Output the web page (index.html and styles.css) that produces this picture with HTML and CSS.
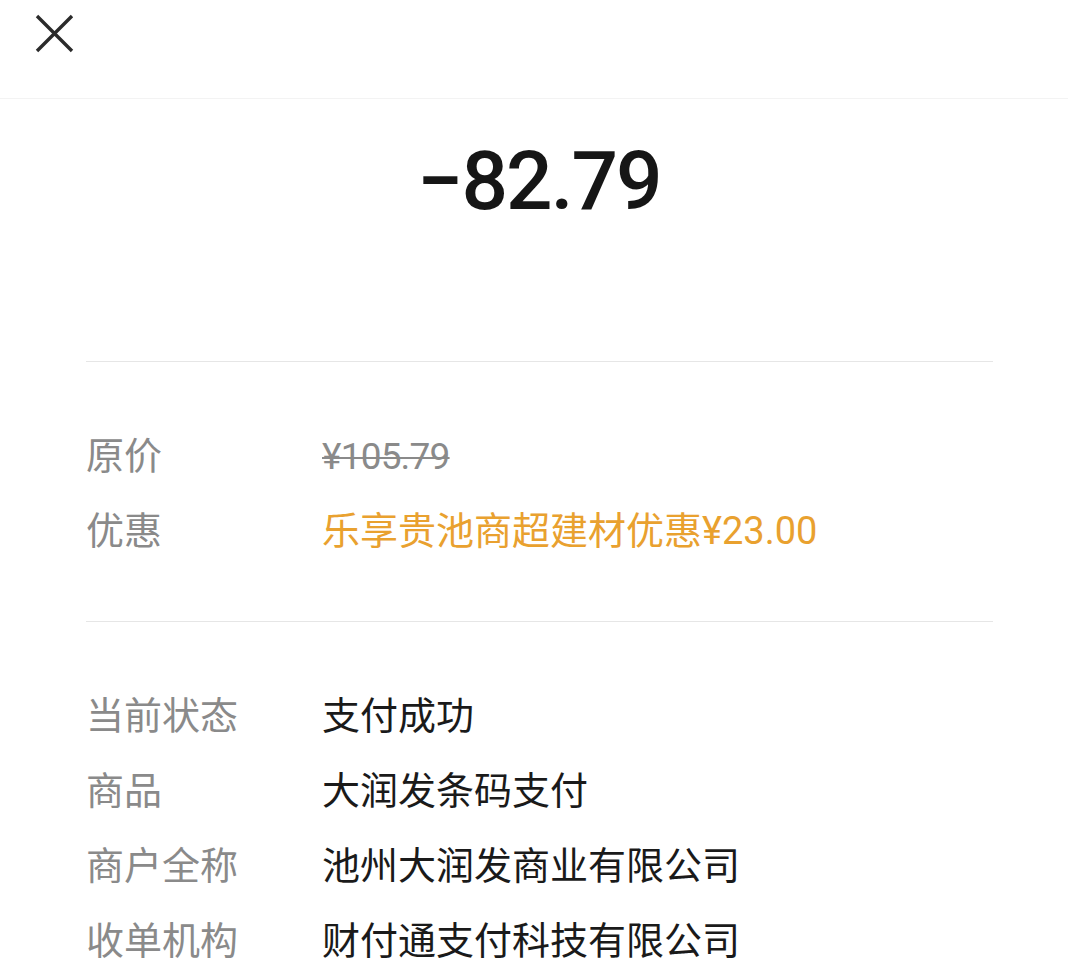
FILE: index.html
```html
<!DOCTYPE html>
<html lang="zh">
<head>
<meta charset="utf-8">
<title>账单详情</title>
<link rel="stylesheet" href="styles.css">
</head>
<body>
<header class="topbar">
  <svg class="close" width="40" height="40" viewBox="0 0 40 40">
    <path d="M2 2 L37 37 M37 2 L2 37" stroke="#2b2b2b" stroke-width="3.4" fill="none"/>
  </svg>
</header>
<main>
  <div class="amount">−82.79</div>
  <section class="group first">
    <div class="row"><span class="label">原价</span><span class="value strike">¥105.79</span></div>
    <div class="row"><span class="label">优惠</span><span class="value promo">乐享贵池商超建材优惠¥23.00</span></div>
  </section>
  <section class="group">
    <div class="row"><span class="label">当前状态</span><span class="value">支付成功</span></div>
    <div class="row"><span class="label">商品</span><span class="value">大润发条码支付</span></div>
    <div class="row"><span class="label">商户全称</span><span class="value">池州大润发商业有限公司</span></div>
    <div class="row"><span class="label">收单机构</span><span class="value">财付通支付科技有限公司</span></div>
  </section>
</main>
</body>
</html>
```
FILE: styles.css
```css
html, body {
  margin: 0;
  padding: 0;
  background: #ffffff;
}
body {
  font-family: Roboto, "Noto Sans CJK SC", sans-serif;
  color: #1a1a1a;
  overflow: hidden;
}
.topbar {
  height: 84px;
  padding: 14px 0 0 35px;
  border-bottom: 1px solid #f3f3f3;
}
.close {
  display: block;
}
.amount {
  padding-top: 40px;
  height: 84px;
  font-size: 82px;
  line-height: 84px;
  font-weight: 500;
  text-align: center;
  color: #161616;
  letter-spacing: -2px;
  padding-left: 10px;
}
main {
  display: flex;
  flex-direction: column;
}
.group {
  margin: 0 75px 0 86px;
  border-top: 1px solid #e6e6e6;
  padding: 57px 0 52px;
}
.group.first {
  margin-top: 138px;
}
.row {
  display: grid;
  grid-template-columns: 236px 1fr;
  height: 75px;
  line-height: 75px;
  font-size: 38px;
  font-family: Roboto, "Noto Sans CJK SC", sans-serif;
}
.label {
  color: #8a8a8a;
}
.value {
  color: #1a1a1a;
}
.strike {
  font-size: 37px;
  color: #8a8a8a;
  letter-spacing: -0.8px;
  text-decoration: line-through;
  text-decoration-thickness: 2px;
}
.promo {
  color: #e9a12f;
}
```
